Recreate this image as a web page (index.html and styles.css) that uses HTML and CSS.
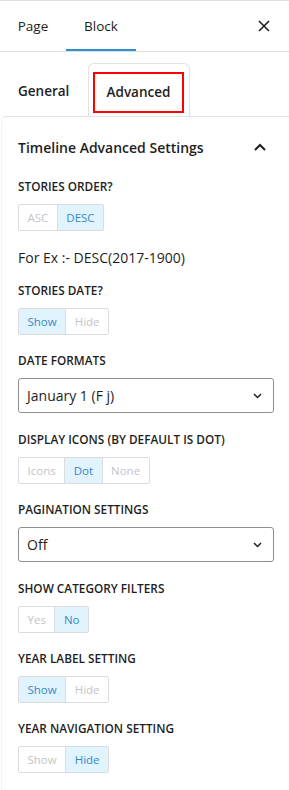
FILE: index.html
```html
<!DOCTYPE html>
<html lang="en">
<head>
<meta charset="utf-8">
<title>Block settings</title>
<link rel="stylesheet" href="styles.css">
</head>
<body>
<div class="sidebar">
  <div class="topbar">
    <div class="tab tab-page">Page</div>
    <div class="tab tab-block is-active">Block</div>
    <button class="close" aria-label="Close">
      <svg width="12" height="12" viewBox="0 0 12 12"><path d="M1 1L11 11M11 1L1 11" stroke="#1e1e1e" stroke-width="1.6" fill="none"/></svg>
    </button>
  </div>

  <div class="subtabs">
    <div class="subtab">General</div>
    <div class="subtab-card"><div class="subtab-active">Advanced</div></div>
  </div>

  <div class="panel">
    <div class="panel-head">
      <span class="panel-title">Timeline Advanced Settings</span>
      <svg class="chev-up" width="14" height="9" viewBox="0 0 14 9"><path d="M2 7L7 2L12 7" stroke="#1e1e1e" stroke-width="2" fill="none"/></svg>
    </div>

    <div class="field">
      <div class="label">Stories Order?</div>
      <div class="group"><span class="seg">ASC</span><span class="seg on">DESC</span></div>
    </div>
    <p class="hint">For Ex :- DESC(2017-1900)</p>

    <div class="field">
      <div class="label">Stories Date?</div>
      <div class="group"><span class="seg on">Show</span><span class="seg">Hide</span></div>
    </div>

    <div class="field field-select">
      <div class="label">Date Formats</div>
      <div class="select"><span>January 1 (F j)</span>
        <svg width="9" height="6" viewBox="0 0 9 6"><path d="M1 1L4.5 4.5L8 1" stroke="#1e1e1e" stroke-width="1.5" fill="none"/></svg>
      </div>
    </div>

    <div class="field">
      <div class="label">Display Icons (By default is Dot)</div>
      <div class="group"><span class="seg">Icons</span><span class="seg on">Dot</span><span class="seg">None</span></div>
    </div>

    <div class="field field-select">
      <div class="label">Pagination Settings</div>
      <div class="select"><span>Off</span>
        <svg width="9" height="6" viewBox="0 0 9 6"><path d="M1 1L4.5 4.5L8 1" stroke="#1e1e1e" stroke-width="1.5" fill="none"/></svg>
      </div>
    </div>

    <div class="field">
      <div class="label">Show Category Filters</div>
      <div class="group"><span class="seg">Yes</span><span class="seg on">No</span></div>
    </div>

    <div class="field">
      <div class="label">Year Label Setting</div>
      <div class="group"><span class="seg on">Show</span><span class="seg">Hide</span></div>
    </div>

    <div class="field">
      <div class="label">Year Navigation Setting</div>
      <div class="group"><span class="seg">Show</span><span class="seg on">Hide</span></div>
    </div>
  </div>
</div>
</body>
</html>
```

FILE: styles.css
```css
* { box-sizing: border-box; }
html, body { margin: 0; padding: 0; background: #fff; }
body {
  font-family: "Open Sans", "Noto Sans", sans-serif;
  color: #1e1e1e;
  width: 289px;
}
.sidebar { border-top: 1px solid #e0e0e0; }

.topbar {
  display: flex;
  height: 51px;
  border-bottom: 1px solid #e0e0e0;
}
.tab {
  display: flex;
  align-items: center;
  justify-content: center;
  font-size: 13.5px;
  color: #1e1e1e;
}
.tab-page { width: 66px; }
.tab-block { width: 70px; }
.tab.is-active { box-shadow: inset 0 -2px 0 #2f8ed0; }
.close {
  margin-left: auto;
  width: 50px;
  border: 0;
  background: none;
  padding: 0;
  display: flex;
  align-items: center;
  justify-content: center;
}

.subtabs {
  display: flex;
  align-items: flex-end;
  height: 64px;
}
.subtab {
  width: 88px;
  height: 53px;
  padding: 3px 0 0 18px;
  display: flex;
  align-items: center;
  font-size: 13.5px;
  font-weight: 600;
}
.subtab-card {
  width: 102px;
  height: 53px;
  border: 1px solid #e2e2e2;
  border-bottom: 0;
  border-radius: 6px 6px 0 0;
  padding: 8px 5px 2px 4px;
}
.subtab-active {
  height: 41px;
  padding-bottom: 2px;
  border: 2px solid #f00;
  display: flex;
  align-items: center;
  justify-content: center;
  font-size: 13.5px;
  font-weight: 600;
}

.panel {
  margin-left: 1px;
  border-top: 1px solid #e2e2e2;
  border-left: 1px solid #f3f3f3;
  border-radius: 5px 0 0 0;
  padding: 0 15px 20px 16px;
}
.panel-head {
  height: 61px;
  display: flex;
  align-items: center;
  justify-content: space-between;
  padding: 0 7px 0 0;
}
.panel-title {
  font-size: 14px;
  font-weight: 600;
}

.field { margin-bottom: 17px; }
.field-select { margin-bottom: 18px; }
.label {
  font-size: 11.8px;
  line-height: 16px;
  font-weight: 600;
  text-transform: uppercase;
  margin-bottom: 10px;
}
.group {
  display: inline-flex;
  height: 27px;
  border: 1px solid #dcdcde;
  border-radius: 2px;
}
.seg {
  display: flex;
  align-items: center;
  padding: 0 8.5px;
  font-size: 11.5px;
  color: #c3c4c7;
}
.seg + .seg { border-left: 1px solid #dcdcde; }
.seg.on {
  background: #e1f3fd;
  color: #3589c9;
}

.hint {
  margin: 5px 0 14px;
  font-size: 14px;
  line-height: 20px;
}

.select {
  height: 35px;
  border: 1px solid #8f8f8f;
  border-radius: 3px;
  display: flex;
  align-items: center;
  justify-content: space-between;
  padding: 0 11px 0 8px;
  font-size: 14px;
}
```
